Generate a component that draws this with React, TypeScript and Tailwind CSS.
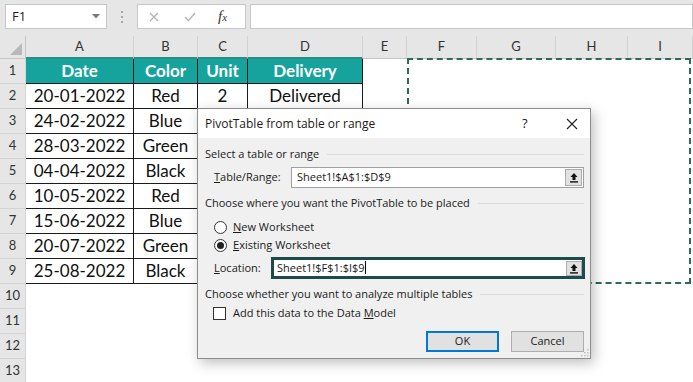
import React from "react";

const COLS = ["w-[26px]", "w-[108px]", "w-[64px]", "w-[50px]", "w-[115px]", "w-[44px]", "w-[70px]", "w-[79px]", "w-[72px]", "w-[65px]"];
const LETTERS = ["A", "B", "C", "D", "E", "F", "G", "H", "I"];

const DATA = [
  ["20-01-2022", "Red", "2", "Delivered"],
  ["24-02-2022", "Blue", "5", "Pending"],
  ["28-03-2022", "Green", "3", "Delivered"],
  ["04-04-2022", "Black", "4", "Pending"],
  ["10-05-2022", "Red", "1", "Delivered"],
  ["15-06-2022", "Blue", "6", "Delivered"],
  ["20-07-2022", "Green", "2", "Pending"],
  ["25-08-2022", "Black", "3", "Delivered"],
];

const ui = { fontFamily: '"Open Sans", "Noto Sans", sans-serif' };
const cell = { fontFamily: 'Lato, "Open Sans", sans-serif' };

function UploadIcon() {
  return (
    <svg width="10" height="11" viewBox="0 0 10 11">
      <path d="M5 1 L1.5 5 H3.5 V8 H6.5 V5 H8.5 Z" fill="#111" />
      <rect x="1" y="9.2" width="8" height="1.4" fill="#111" />
    </svg>
  );
}

function GroupLabel({ text }: { text: string }) {
  return (
    <div className="flex h-4 items-center gap-2 pl-[7px] pr-[6px]">
      <span className="whitespace-nowrap text-[11px] text-[#1a1a1a]">{text}</span>
      <div className="h-px flex-1 bg-[#dcdcdc]" />
    </div>
  );
}

function Dialog() {
  return (
    <div
      className="absolute left-[197px] top-[108px] flex h-[251px] w-[394px] flex-col border border-[#8c8c8c] bg-[#f0f0f0] text-[11px] shadow-[3px_4px_12px_rgba(0,0,0,0.25)]"
      style={ui}
    >
      <div className="flex h-[29px] items-center bg-white pl-[7px] text-[12px] text-[#1a1a1a]">
        <span className="flex-1">PivotTable from table or range</span>
        <span className="w-[44px] text-[13px]">?</span>
        <svg width="12" height="12" viewBox="0 0 12 12" className="mr-[12px]">
          <path d="M1 1 L11 11 M11 1 L1 11" stroke="#222" strokeWidth="1.1" />
        </svg>
      </div>

      <div className="mt-[8px]">
        <GroupLabel text="Select a table or range" />
      </div>
      <div className="mt-[5px] flex h-[21px] items-center text-[#1a1a1a]">
        <span className="w-[93px] pl-[16px]">
          <u>T</u>able/Range:
        </span>
        <div className="flex h-[21px] w-[293px] items-center border border-[#a0a0a0] bg-white pl-[5px]">
          <span className="flex-1">Sheet1!$A$1:$D$9</span>
          <div className="mr-px flex h-[17px] w-[17px] items-center justify-center border border-[#adadad] bg-[#e1e1e1]">
            <UploadIcon />
          </div>
        </div>
      </div>

      <div className="mt-[7px]">
        <GroupLabel text="Choose where you want the PivotTable to be placed" />
      </div>
      <div className="mt-[8px] flex h-4 items-center pl-[16px] text-[#1a1a1a]">
        <span className="h-[13px] w-[13px] rounded-full border border-[#333] bg-white" />
        <span className="ml-[6px]">
          <u>N</u>ew Worksheet
        </span>
      </div>
      <div className="mt-[2px] flex h-4 items-center pl-[16px] text-[#1a1a1a]">
        <span className="flex h-[13px] w-[13px] items-center justify-center rounded-full border border-[#333] bg-white">
          <span className="h-[7px] w-[7px] rounded-full bg-[#222]" />
        </span>
        <span className="ml-[6px]">
          <u>E</u>xisting Worksheet
        </span>
      </div>
      <div className="mt-[4px] flex h-[22px] items-center text-[#1a1a1a]">
        <span className="w-[73px] pl-[16px]">
          <u>L</u>ocation:
        </span>
        <div className="flex h-[22px] w-[314px] items-center border-[3px] border-[#1d4b4b] bg-white pl-[3px]">
          <span className="flex-1">
            Sheet1!$F$1:$I$9<span className="inline-block h-[13px] w-px translate-y-[2px] bg-black" />
          </span>
          <div className="flex h-[15px] w-[16px] items-center justify-center border border-[#adadad] bg-[#e1e1e1]">
            <UploadIcon />
          </div>
        </div>
      </div>

      <div className="mt-[7px]">
        <GroupLabel text="Choose whether you want to analyze multiple tables" />
      </div>
      <div className="mt-[3px] flex h-4 items-center pl-[15px] text-[#1a1a1a]">
        <span className="h-[13px] w-[13px] border border-[#333] bg-white" />
        <span className="ml-[7px]">
          Add this data to the Data <u>M</u>odel
        </span>
      </div>

      <div className="mt-[10px] flex h-[21px] justify-end gap-[12px] pr-[6px] text-[#1a1a1a]">
        <button className="h-[21px] w-[73px] border-2 border-[#0078d7] bg-[#e1e1e1]">OK</button>
        <button className="h-[21px] w-[73px] border border-[#adadad] bg-[#e1e1e1]">Cancel</button>
      </div>
      <svg width="8" height="8" viewBox="0 0 8 8" className="absolute bottom-[1px] right-[1px]">
        <rect x="6" y="0" width="1.5" height="1.5" fill="#bdbdbd" />
        <rect x="3" y="3" width="1.5" height="1.5" fill="#bdbdbd" />
        <rect x="6" y="3" width="1.5" height="1.5" fill="#bdbdbd" />
        <rect x="0" y="6" width="1.5" height="1.5" fill="#bdbdbd" />
        <rect x="3" y="6" width="1.5" height="1.5" fill="#bdbdbd" />
        <rect x="6" y="6" width="1.5" height="1.5" fill="#bdbdbd" />
      </svg>
    </div>
  );
}

function FormulaBar() {
  return (
    <div className="flex h-[36px] items-start bg-[#e6e6e6] pt-[4px]" style={ui}>
      <div className="ml-[5px] flex h-[25px] w-[102px] items-center border border-[#c6c6c6] bg-white pl-[6px] text-[13px] text-[#222]">
        <span className="flex-1">F1</span>
        <svg width="8" height="5" viewBox="0 0 8 5" className="mr-[6px]">
          <path d="M0 0 H8 L4 4.5 Z" fill="#7a7a7a" />
        </svg>
      </div>
      <div className="flex h-[25px] w-[30px] flex-col items-center justify-center gap-[3px]">
        <span className="h-[2px] w-[2px] bg-[#a8a8a8]" />
        <span className="h-[2px] w-[2px] bg-[#a8a8a8]" />
        <span className="h-[2px] w-[2px] bg-[#a8a8a8]" />
      </div>
      <div className="flex h-[25px] w-[109px] items-center border border-[#c6c6c6] bg-white">
        <svg width="10" height="10" viewBox="0 0 10 10" className="ml-[11px]">
          <path d="M1 1 L9 9 M9 1 L1 9" stroke="#b4b4b4" strokeWidth="1.3" />
        </svg>
        <svg width="12" height="10" viewBox="0 0 12 10" className="ml-[25px]">
          <path d="M1 5 L4.5 8.5 L11 1" stroke="#b4b4b4" strokeWidth="1.4" fill="none" />
        </svg>
        <span className="ml-[22px] text-[15px] italic text-[#333]" style={{ fontFamily: '"Liberation Serif", serif' }}>
          f<span className="text-[11px]">x</span>
        </span>
      </div>
      <div className="ml-[4px] h-[25px] flex-1 border border-[#c6c6c6] bg-white" />
    </div>
  );
}

function HeaderRow() {
  return (
    <div className="flex h-[23px]" style={cell}>
      <div className={`${COLS[0]} relative border-b border-r border-[#c6c6c6] bg-[#e6e6e6]`}>
        <svg width="12" height="12" viewBox="0 0 12 12" className="absolute bottom-[3px] right-[3px]">
          <path d="M12 0 V12 H0 Z" fill="#b9b9b9" />
        </svg>
      </div>
      {LETTERS.map((l, i) => (
        <div
          key={l}
          className={`${COLS[i + 1]} flex items-center justify-center border-r border-[#d2d2d2] bg-[#e6e6e6] text-[13px] text-[#333] ${
            i < 4 ? "border-b-2 border-b-[#2a8f80]" : "border-b border-b-[#c6c6c6]"
          }`}
        >
          {l}
        </div>
      ))}
    </div>
  );
}

function Row({ n, values, head }: { n: number; values?: string[]; head?: boolean }) {
  return (
    <div className="flex h-[25px]" style={cell}>
      <div className={`${COLS[0]} flex items-center justify-center border-b border-r border-[#d4d4d4] bg-[#e6e6e6] text-[13px] text-[#333]`}>
        {n}
      </div>
      {LETTERS.map((l, i) => {
        const inTable = values && i < 4;
        return (
          <div
            key={l}
            className={`${COLS[i + 1]} flex items-center justify-center whitespace-nowrap ${
              inTable
                ? head
                  ? "border-b border-r border-[#1b1b1b] bg-[#17a39d] text-[17px] font-bold text-white"
                  : "border-b border-r border-[#1b1b1b] text-[17px] text-[#111]"
                : ""
            }`}
          >
            {inTable ? values[i] : ""}
          </div>
        );
      })}
    </div>
  );
}

export default function App() {
  return (
    <div className="relative h-[382px] w-[693px] overflow-hidden bg-white">
      <FormulaBar />
      <HeaderRow />
      <Row n={1} head values={["Date", "Color", "Unit", "Delivery"]} />
      {DATA.map((d, i) => (
        <Row key={i} n={i + 2} values={d} />
      ))}
      {[10, 11, 12, 13].map((n) => (
        <Row key={n} n={n} />
      ))}
      <div className="absolute left-[407px] top-[58px] h-[226px] w-[284px] border-2 border-dashed border-[#2d6b52]" />
      <Dialog />
    </div>
  );
}
